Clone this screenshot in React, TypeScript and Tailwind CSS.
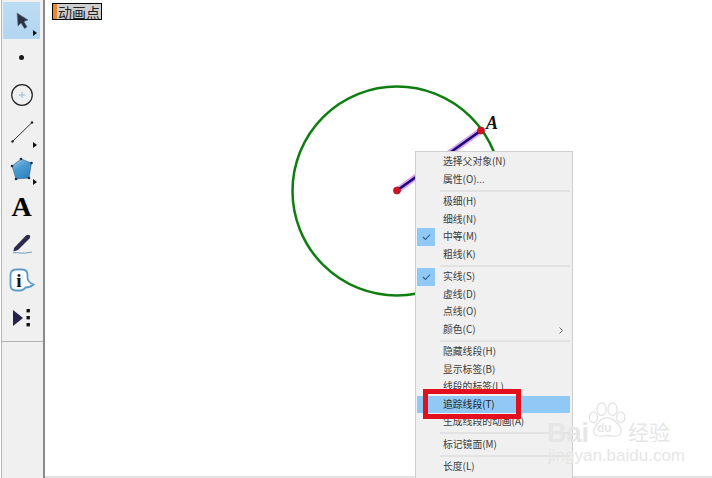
import React from 'react'

const cjk = { fontFamily: '"Noto Sans CJK SC", "Liberation Sans", sans-serif' }

type MenuRow = { label: string; checked?: boolean; arrow?: boolean; active?: boolean } | 'sep'

const menuRows: MenuRow[] = [
  { label: '选择父对象(N)' },
  { label: '属性(O)...' },
  'sep',
  { label: '极细(H)' },
  { label: '细线(N)' },
  { label: '中等(M)', checked: true },
  { label: '粗线(K)' },
  'sep',
  { label: '实线(S)', checked: true },
  { label: '虚线(D)' },
  { label: '点线(O)' },
  { label: '颜色(C)', arrow: true },
  'sep',
  { label: '隐藏线段(H)' },
  { label: '显示标签(B)' },
  { label: '线段的标签(L)...' },
  { label: '追踪线段(T)', active: true },
  { label: '生成线段的动画(A)' },
  'sep',
  { label: '标记镜面(M)' },
  'sep',
  { label: '长度(L)' },
]

function ToolButton({ children, selected, more }: { children: React.ReactNode; selected?: boolean; more?: boolean }) {
  return (
    <div className={`relative h-[37.2px] w-[37px] flex items-center justify-center ${selected ? 'bg-gradient-to-b from-[#bcdcf4] to-[#b2d5f0]' : ''}`}>
      {children}
      {more && <span className="absolute right-[3px] bottom-[3px] w-0 h-0 border-y-[3px] border-y-transparent border-l-[4px] border-l-[#111]" />}
    </div>
  )
}

function Toolbar() {
  return (
    <div className="w-[44px] h-full shrink-0 bg-[#f0f0f0] border-l border-l-[#b4b4b4] border-r-2 border-r-[#8a8a8a] ml-px flex flex-col">
      <div className="pt-[2px] pl-px flex flex-col">
        <ToolButton selected more>
          <svg width="20" height="22" viewBox="0 0 20 22">
            <path d="M5 3 L6 16 L9 13 L12.5 18.5 L15 17 L12 11.5 L16 10 Z" fill="#2a3142" stroke="#6b7280" strokeWidth="0.7" />
          </svg>
        </ToolButton>
        <ToolButton>
          <span className="w-[5px] h-[5px] rounded-full bg-[#1a1a1a]" />
        </ToolButton>
        <ToolButton>
          <svg width="24" height="24" viewBox="0 0 24 24">
            <circle cx="12" cy="12" r="10.3" fill="none" stroke="#222" strokeWidth="1.2" />
            <path d="M12 9v6M9 12h6" stroke="#a9c8de" strokeWidth="1.4" />
          </svg>
        </ToolButton>
        <ToolButton more>
          <svg width="24" height="24" viewBox="0 0 24 24">
            <path d="M2.5 21.5 L22 2.5" stroke="#333" strokeWidth="1" />
            <circle cx="2.5" cy="21.5" r="1.2" fill="#222" />
            <circle cx="22" cy="2.5" r="1.2" fill="#222" />
          </svg>
        </ToolButton>
        <ToolButton more>
          <svg width="24" height="24" viewBox="0 0 24 24">
            <defs>
              <linearGradient id="pent" x1="0" y1="0" x2="0.6" y2="1">
                <stop offset="0" stopColor="#a5cfe8" />
                <stop offset="0.5" stopColor="#4a9bd0" />
                <stop offset="1" stopColor="#3186c0" />
              </linearGradient>
            </defs>
            <path d="M11 2 L21.5 6 L19 21 L6 22 L2 9 Z" fill="url(#pent)" stroke="#27506e" strokeWidth="0.5" />
            <circle cx="11" cy="2" r="1.3" fill="#1f2a44" />
            <circle cx="21.5" cy="6" r="1.3" fill="#1f2a44" />
            <circle cx="19" cy="21" r="1.3" fill="#1f2a44" />
            <circle cx="6" cy="22" r="1.3" fill="#1f2a44" />
            <circle cx="2" cy="9" r="1.3" fill="#1f2a44" />
          </svg>
        </ToolButton>
        <ToolButton>
          <span className="text-[28px] leading-none font-bold text-black" style={{ fontFamily: '"Liberation Serif", serif' }}>A</span>
        </ToolButton>
        <ToolButton>
          <svg width="24" height="22" viewBox="0 0 24 22">
            <path d="M4 15 L16 2.5 Q18 1 20 2.5 Q20.5 4 19.5 5.5 L8 17 L3.5 18.5 Z" fill="#2c2a4e" />
            <path d="M3 20 Q6 19.2 10 20 T22 19" fill="none" stroke="#6f9fc4" strokeWidth="1" />
          </svg>
        </ToolButton>
        <ToolButton>
          <svg width="26" height="25" viewBox="0 0 26 25">
            <path d="M7 1.5 H13 Q18.5 1.5 18.5 7 V10 Q19 14.5 24.5 16.5 Q21 19.5 16.5 19.5 Q14.5 22.5 11 22.5 H7 Q1.5 22.5 1.5 17 V7 Q1.5 1.5 7 1.5 Z" fill="#fff" stroke="#5a9bc6" strokeWidth="1.8" />
            <text x="10" y="19" textAnchor="middle" fontSize="19" fontWeight="700" fill="#111" fontFamily="Liberation Serif, serif">i</text>
          </svg>
        </ToolButton>
        <ToolButton>
          <svg width="22" height="20" viewBox="0 0 22 20">
            <path d="M2 2 L12 10 L2 18 Z" fill="#23234a" />
            <rect x="15.5" y="1" width="3.4" height="3.4" fill="#111" />
            <rect x="15.5" y="8" width="3.4" height="3.4" fill="#111" />
            <rect x="15.5" y="15" width="3.4" height="3.4" fill="#111" />
          </svg>
        </ToolButton>
      </div>
      <div className="mt-[4px] h-px bg-[#b0b0b0]" />
    </div>
  )
}

function ContextMenu() {
  return (
    <div className="absolute left-[415px] top-[151px] w-[158px] h-[340px] bg-[#f0f0f0] border border-[#cfcfcf] pt-px pl-px pr-[2px] text-[9.8px] text-[#3a3a3a]" style={cjk}>
      {menuRows.map((row, i) =>
        row === 'sep' ? (
          <div key={i} className="h-[5px] ml-[23px] flex items-center">
            <div className="h-[2px] w-full bg-[#e2e2e2]" />
          </div>
        ) : (
          <div key={i} className={`h-[17.5px] flex items-center relative ${row.active ? 'bg-[#90c8f6] text-[#222]' : ''}`}>
            <span className={`w-[18px] h-[17.5px] flex items-center justify-center shrink-0 ${row.checked ? 'bg-[#90c8f6]' : ''}`}>
              {row.checked && (
                <svg width="9" height="8" viewBox="0 0 9 8">
                  <path d="M1 4 L3.5 6.5 L8 1.5" fill="none" stroke="#2c5a80" strokeWidth="1.1" />
                </svg>
              )}
            </span>
            <span className="ml-[8px] whitespace-nowrap">{row.label}</span>
            {row.arrow && (
              <svg className="absolute right-[7px] top-[6px]" width="4" height="7" viewBox="0 0 4 7">
                <path d="M0.5 0.5 L3.5 3.5 L0.5 6.5" fill="none" stroke="#555" strokeWidth="0.9" />
              </svg>
            )}
          </div>
        ),
      )}
    </div>
  )
}

function Watermark() {
  return (
    <div className="absolute left-[547px] top-[401px] w-[128px] h-[62px] text-[#e6e6e6] pointer-events-none">
      <svg className="absolute left-[41px] top-0" width="40" height="40" viewBox="0 0 44 42" fill="none" stroke="#e2e2e2" strokeWidth="1.3">
        <ellipse cx="6" cy="17" rx="4.5" ry="6" />
        <ellipse cx="15" cy="8" rx="5" ry="7" />
        <ellipse cx="27" cy="8" rx="5" ry="7" />
        <ellipse cx="36" cy="17" rx="4.5" ry="6" />
        <path d="M21 17 C14 18 4 28 7 35 C10 40 17 37 21 37 C26 37 33 40 36 35 C39 28 28 18 21 17 Z" />
      </svg>
      <span className="absolute left-[50px] top-[21px] text-[12px] font-bold leading-none" style={{ fontFamily: '"Liberation Sans", sans-serif' }}>du</span>
      <span className="absolute left-0 top-[19px] text-[27px] font-bold leading-none" style={{ fontFamily: '"Liberation Sans", sans-serif' }}>Bai</span>
      <span className="absolute left-[81px] top-[20px] text-[21px] leading-none whitespace-nowrap" style={cjk}>经验</span>
      <span className="absolute left-[1px] top-[46px] text-[17px] leading-none whitespace-nowrap" style={{ fontFamily: '"Liberation Sans", sans-serif' }}>jingyan.baidu.com</span>
    </div>
  )
}

export default function App() {
  return (
    <div className="relative w-[712px] h-[478px] overflow-hidden bg-white flex">
      <Toolbar />

      <div className="flex-1 relative border-b-2 border-b-[#e2e2e2]">
        <div className="absolute left-[7px] top-[3px] h-[17px] w-[50px] border border-black bg-[#cfcfcf] flex items-center">
          <span className="w-[4px] h-full bg-[#e8892b] shrink-0" />
          <span className="ml-px text-[14px] leading-none text-[#222] whitespace-nowrap" style={cjk}>动画点</span>
        </div>
      </div>

      {/* sketch on the canvas */}
      <svg className="absolute left-0 top-0 pointer-events-none" width="712" height="478" viewBox="0 0 712 478">
        <circle cx="397" cy="191" r="104.5" fill="none" stroke="#0f7d0f" strokeWidth="2.5" />
        <path d="M397 190.5 L481 130.5" stroke="#d9a3ec" strokeWidth="6" />
        <path d="M397 190.5 L481 130.5" stroke="#1a0a78" strokeWidth="2.6" />
        <circle cx="397" cy="190.5" r="3.6" fill="#d4111f" stroke="#8a1020" strokeWidth="0.6" />
        <circle cx="481" cy="130.5" r="3.6" fill="#d4111f" stroke="#8a1020" strokeWidth="0.6" />
      </svg>
      <span className="absolute left-[486px] top-[114px] text-[18px] leading-none font-bold italic text-[#111]" style={{ fontFamily: '"Liberation Serif", serif' }}>A</span>

      <ContextMenu />
      <Watermark />

      {/* red annotation box */}
      <div className="absolute left-[423px] top-[389px] w-[98px] h-[30px] border-[5px] border-[#e30f1c]" />
    </div>
  )
}
